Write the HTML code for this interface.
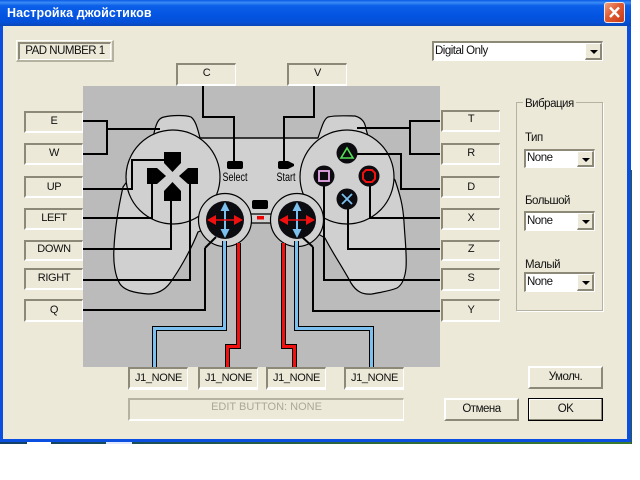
<!DOCTYPE html>
<html><head><meta charset="utf-8"><style>
html,body{margin:0;padding:0;background:#fff;}
body{width:640px;height:480px;overflow:hidden;position:relative;font-family:"Liberation Sans","Noto Sans CJK SC",sans-serif;font-size:11px;color:#111;}
div{box-sizing:border-box;}
.a{position:absolute;}
.win{left:0;top:0;width:631px;height:442px;background:#0a4fe0;}
.desk2{left:0;top:442px;width:632px;height:2px;background:linear-gradient(90deg,#123f6a,#2f6a3a 60%,#3d7a30);}
.desk3{left:631px;top:170px;width:1px;height:274px;background:#2f5a3a;}
.title{left:0;top:0;width:631px;height:26px;background:linear-gradient(180deg,#0a5be6 0,#3a8cf5 10%,#0b5fe8 22%,#0454e2 60%,#0350d8 85%,#0a46b8 100%);}
.tt{left:7px;top:5px;color:#fff;font-weight:bold;font-size:12.5px;line-height:16px;letter-spacing:.1px;}
.face{left:3px;top:26px;width:624px;height:413px;background:#ece9d8;}
.close{left:604px;top:2px;width:21px;height:21px;border-radius:3px;background:linear-gradient(135deg,#f0a080,#e05a30 45%,#c83a18);border:1px solid #f3e8e0;}
.s{position:absolute;border-top:2px solid #8c8978;border-left:2px solid #8c8978;border-right:1px solid #fff;border-bottom:2px solid #fff;text-align:center;line-height:17px;background:#ece9d8;font-size:11px;letter-spacing:-.35px;}
.g{position:absolute;background:#bbb;left:83px;top:86px;width:357px;height:281px;}
.cb{position:absolute;background:#fff;border-top:2px solid #8c8978;border-left:2px solid #8c8978;border-right:1px solid #fff;border-bottom:1px solid #fff;line-height:17px;padding-left:1px;font-size:11.5px;letter-spacing:-.5px;}
.ar{position:absolute;right:0;top:0;bottom:0;width:17px;background:#ece9d8;border-right:2px solid #8c8978;border-bottom:2px solid #8c8978;border-top:1px solid #fff;border-left:1px solid #fff;}
.ar:after{content:"";position:absolute;left:4px;top:6px;border-left:4px solid transparent;border-right:4px solid transparent;border-top:4px solid #000;}
.btn{position:absolute;background:#ece9d8;border-top:2px solid #fff;border-left:2px solid #fff;border-right:2px solid #8c8978;border-bottom:2px solid #8c8978;text-align:center;line-height:18px;font-size:11.5px;letter-spacing:-.5px;}
.l{position:absolute;line-height:14px;font-size:11.5px;letter-spacing:-.5px;}
</style></head><body>
<div class="a win"></div><div class="a desk2"></div><div class="a desk3"></div>
<div class="a" style="left:27px;top:442px;width:24px;height:2px;background:#fff"></div>
<div class="a" style="left:106px;top:442px;width:26px;height:2px;background:#dfe8ff"></div>
<div class="a title"></div><div class="a tt">Настройка джойстиков</div>
<div class="a close"><svg width="19" height="19" style="display:block"><path d="M5 4.5L14 14M14 4.5L5 14" stroke="#fff" stroke-width="2.4"/></svg></div>
<div class="a face"></div>

<div class="a" style="left:16px;top:40px;width:98px;height:22px;border-top:1px solid #fff;border-left:1px solid #fff;border-right:2px solid #b5b2a2;border-bottom:2px solid #b5b2a2;"></div>
<div class="s" style="left:18px;top:42px;width:93px;height:18px;border-bottom:1px solid #fff;line-height:15px;font-size:11.5px;letter-spacing:-.5px;">PAD NUMBER 1</div>

<div class="cb" style="left:432px;top:41px;width:171px;height:20px;">Digital Only<div class="ar"></div></div>

<div class="s" style="left:176px;top:63px;width:60px;height:23px">C</div>
<div class="s" style="left:287px;top:63px;width:60px;height:23px">V</div>

<div class="s" style="left:24px;top:111px;width:59px;height:22px">E</div>
<div class="s" style="left:24px;top:143px;width:59px;height:22px">W</div>
<div class="s" style="left:24px;top:176px;width:59px;height:22px;line-height:18px">UP</div>
<div class="s" style="left:24px;top:208px;width:59px;height:22px">LEFT</div>
<div class="s" style="left:24px;top:240px;width:59px;height:21px;line-height:15px">DOWN</div>
<div class="s" style="left:24px;top:268px;width:59px;height:22px">RIGHT</div>
<div class="s" style="left:24px;top:299px;width:59px;height:23px;line-height:18px">Q</div>

<div class="s" style="left:441px;top:110px;width:59px;height:22px;line-height:15px">T</div>
<div class="s" style="left:441px;top:143px;width:59px;height:22px">R</div>
<div class="s" style="left:441px;top:176px;width:59px;height:22px;line-height:18px">D</div>
<div class="s" style="left:441px;top:208px;width:59px;height:22px">X</div>
<div class="s" style="left:441px;top:240px;width:59px;height:21px;line-height:15px">Z</div>
<div class="s" style="left:441px;top:268px;width:59px;height:23px">S</div>
<div class="s" style="left:441px;top:299px;width:59px;height:23px;line-height:18px">Y</div>

<div class="g"></div>
<svg class="a" style="left:83px;top:86px" width="357" height="281" viewBox="83 86 357 281">
<g fill="#d0d0d0" stroke="#000" stroke-width="1.200">
<path d="M155 129C157 122 159 118 164 117C172 115 186 115 191 117C195 120 197 126 200 138L318 138C322 126 324 119 328 117C336 115 350 116 355 116C362 118 365 122 366 129L372 150L395 180C400 195 403 205 404 222C405 240 407 255 406 268C405 278 402 285 397 288C390 291 382 292 372 294C362 295 356 291 351 283C343 268 332 252 325 238L300 223L222 223L198 232C190 252 178 272 170 283C164 291 157 294 148 294C136 293 125 291 120 284C115 276 113 262 114 248C115 225 119 205 123 187L150 150Z"/>
</g>
<path d="M250 214H272" stroke="#000" stroke-width="1.200"/>
<circle cx="173" cy="177" r="47" fill="#d0d0d0" stroke="#000" stroke-width="1.200"/>
<circle cx="347" cy="177" r="47" fill="#d0d0d0" stroke="#000" stroke-width="1.200"/>
<path d="M200 138H318" stroke="#000" stroke-width="1.200"/>
<circle cx="225" cy="220" r="26.500" fill="#d0d0d0" stroke="#000" stroke-width="1.200"/>
<circle cx="297" cy="220" r="26.500" fill="#d0d0d0" stroke="#000" stroke-width="1.200"/>

<g fill="none" stroke="#000" stroke-width="2" shape-rendering="crispEdges">
<path d="M83 121H107V154H83M107 129H160"/>
<path d="M83 189H132V160H170"/>
<path d="M83 218H152V183"/>
<path d="M83 249H171V200"/>
<path d="M83 280H190V183"/>
<path d="M83 310H205V248"/>
<path d="M440 121H410V154H440M410 128H357"/>
<path d="M440 189H401V154H357"/>
<path d="M440 218H370V180"/>
<path d="M440 249H348V200"/>
<path d="M440 280H324V186"/>
<path d="M440 311H313V247"/>
<path d="M203 86V117H234V162"/>
<path d="M314 86V117H284V162"/>
</g>
<path d="M205 248L216 237M313 247L301 236" stroke="#000" stroke-width="2" fill="none"/>

<path d="M164 152H181V163L172.500 172L164 163Z" fill="#000"/>
<path d="M147 168H157L166 176L157 184H147Z" fill="#000"/>
<path d="M198 168H188L179 176L188 184H198Z" fill="#000"/>
<path d="M164 201H181V191L172.500 182L164 191Z" fill="#000"/>

<rect x="227" y="161" width="16" height="8" rx="2" fill="#000"/>
<path d="M278 163Q278 161 280 161H288L294 164V166L288 169H280Q278 169 278 167Z" fill="#000"/>
<rect x="252" y="200" width="16" height="9" rx="2" fill="#000"/>
<rect x="257" y="216" width="7" height="3.500" fill="#e00"/>
<text x="235" y="181" text-anchor="middle" font-family="Liberation Sans,sans-serif" font-size="12" textLength="25" lengthAdjust="spacingAndGlyphs" fill="#000">Select</text>
<text x="286" y="181" text-anchor="middle" font-family="Liberation Sans,sans-serif" font-size="12" textLength="19" lengthAdjust="spacingAndGlyphs" fill="#000">Start</text>

<circle cx="225" cy="220" r="19" fill="#0b0b10"/>
<circle cx="297" cy="220" r="19" fill="#0b0b10"/>
<g>
<path d="M225 207V233" stroke="#7cc0f0" stroke-width="2"/>
<path d="M225 202L220.500 211H229.500Z M225 238L220.500 229H229.500Z" fill="#7cc0f0"/>
<path d="M212 220H238" stroke="#f01010" stroke-width="1.500"/>
<path d="M207 220L216 215V225Z M243 220L234 215V225Z" fill="#f01010"/>
</g>
<g transform="translate(72 0)">
<path d="M225 207V233" stroke="#7cc0f0" stroke-width="2"/>
<path d="M225 202L220.500 211H229.500Z M225 238L220.500 229H229.500Z" fill="#7cc0f0"/>
<path d="M212 220H238" stroke="#f01010" stroke-width="1.500"/>
<path d="M207 220L216 215V225Z M243 220L234 215V225Z" fill="#f01010"/>
</g>

<circle cx="347" cy="153" r="10.500" fill="#0b0b10"/>
<circle cx="369" cy="176" r="10.500" fill="#0b0b10"/>
<circle cx="324" cy="176" r="10.500" fill="#0b0b10"/>
<circle cx="347" cy="199" r="10.500" fill="#0b0b10"/>
<path d="M347 148L353 158H341Z" fill="none" stroke="#55e055" stroke-width="1.600"/>
<path d="M366 170H372L375 173V179L372 182H366L363 179V173Z" fill="none" stroke="#f01010" stroke-width="2"/>
<rect x="319" y="171" width="10" height="10" fill="none" stroke="#e8a8e8" stroke-width="1.800"/>
<path d="M342 194L352 204M352 194L342 204" stroke="#7cc0f0" stroke-width="1.800"/>

<g fill="none" stroke-linejoin="miter" shape-rendering="crispEdges">
<path d="M154.500 367V328.500H224.500V241" stroke="#000" stroke-width="5"/>
<path d="M154.500 367V328.500H224.500V241" stroke="#7cc0f0" stroke-width="3"/>
<path d="M371.500 367V328.500H296.500V241" stroke="#000" stroke-width="5"/>
<path d="M371.500 367V328.500H296.500V241" stroke="#7cc0f0" stroke-width="3"/>
<path d="M227.500 367V346.500H238.500V243" stroke="#000" stroke-width="5"/>
<path d="M227.500 367V346.500H238.500V243" stroke="#f01010" stroke-width="3"/>
<path d="M294.500 367V346.500H283.500V243" stroke="#000" stroke-width="5"/>
<path d="M294.500 367V346.500H283.500V243" stroke="#f01010" stroke-width="3"/>
</g>
</svg>

<div class="s" style="left:128px;top:367px;width:60px;height:23px;border-bottom-width:3px;line-height:19px">J1_NONE</div>
<div class="s" style="left:198px;top:367px;width:60px;height:23px;border-bottom-width:3px;line-height:19px">J1_NONE</div>
<div class="s" style="left:266px;top:367px;width:60px;height:23px;border-bottom-width:3px;line-height:19px">J1_NONE</div>
<div class="s" style="left:344px;top:367px;width:60px;height:23px;border-bottom-width:3px;line-height:19px">J1_NONE</div>
<div class="s" style="left:128px;top:398px;width:276px;height:23px;color:#aca899;border-top-color:#b5b2a2;border-left-color:#b5b2a2;line-height:14px;letter-spacing:0">EDIT BUTTON: NONE</div>

<div class="a" style="left:516px;top:102px;width:87px;height:209px;border:1px solid #b5b2a2;box-shadow:1px 1px 0 #fff;"></div>
<div class="l" style="left:523px;top:97px;background:#ece9d8;padding:0 2px;">Вибрация</div>
<div class="l" style="left:525px;top:131px;">Тип</div>
<div class="cb" style="left:524px;top:149px;width:71px;height:19px;line-height:15px">None<div class="ar"></div></div>
<div class="l" style="left:525px;top:194px;">Большой</div>
<div class="cb" style="left:524px;top:211px;width:71px;height:20px;line-height:16px">None<div class="ar"></div></div>
<div class="l" style="left:525px;top:258px;">Малый</div>
<div class="cb" style="left:524px;top:272px;width:71px;height:20px;line-height:16px">None<div class="ar"></div></div>

<div class="btn" style="left:528px;top:366px;width:75px;height:23px;">Умолч.</div>
<div class="btn" style="left:444px;top:398px;width:75px;height:23px;">Отмена</div>
<div class="btn" style="left:528px;top:398px;width:75px;height:23px;border:1px solid #000;box-shadow:inset -1px -1px 0 #8c8978,inset 1px 1px 0 #fff;line-height:20px;">OK</div>
</body></html>
